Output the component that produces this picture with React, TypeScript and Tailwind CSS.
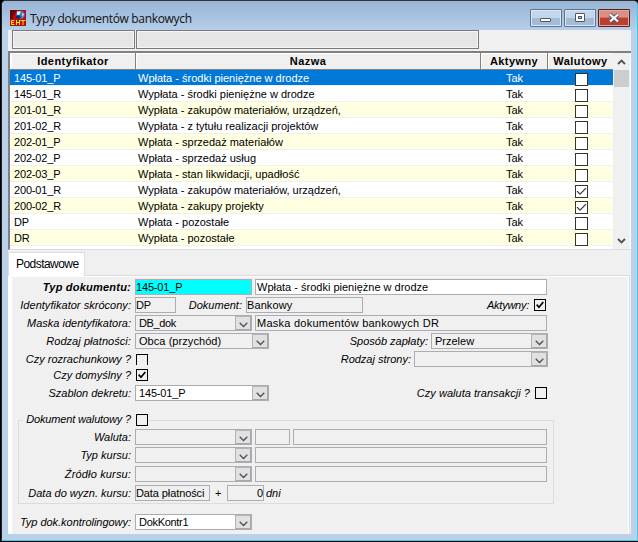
import React from "react";

type DocType = { id: string; name: string; currency?: boolean };

const rows: DocType[] = [
  { id: "145-01_P", name: "Wpłata - środki pieniężne w drodze" },
  { id: "145-01_R", name: "Wypłata - środki pieniężne w drodze" },
  { id: "201-01_R", name: "Wypłata - zakupów materiałów, urządzeń," },
  { id: "201-02_R", name: "Wypłata - z tytułu realizacji projektów" },
  { id: "202-01_P", name: "Wpłata - sprzedaż materiałów" },
  { id: "202-02_P", name: "Wpłata - sprzedaż usług" },
  { id: "202-03_P", name: "Wpłata - stan likwidacji, upadłość" },
  { id: "200-01_R", name: "Wypłata - zakupów materiałów, urządzeń,", currency: true },
  { id: "200-02_R", name: "Wypłata - zakupy projekty", currency: true },
  { id: "DP", name: "Wpłata - pozostałe" },
  { id: "DR", name: "Wypłata - pozostałe" },
];

function Chevron() {
  return (
    <svg width="9" height="6" viewBox="0 0 9 6" fill="none" stroke="#505050" strokeWidth="1.3">
      <path d="M0.7 0.8 4.5 4.5 8.3 0.8" />
    </svg>
  );
}

function Label({ children, className }: { children: React.ReactNode; className: string }) {
  return <span className={`shrink-0 whitespace-pre text-right italic ${className}`}>{children}</span>;
}

function Field({ className = "", children }: { className?: string; children?: React.ReactNode }) {
  return (
    <div className={`flex h-4 shrink-0 items-center whitespace-pre border border-[#abadb3] ${className}`}>{children}</div>
  );
}

function Select({ className = "", children }: { className?: string; children?: React.ReactNode }) {
  return (
    <div className={`flex h-4 shrink-0 items-center border border-[#abadb3] pl-[3px] ${className}`}>
      <span className="grow whitespace-pre">{children}</span>
      <span className="flex h-[14px] w-[16px] items-center justify-center border border-[#b4b4b8] border-r-[#a8a8ac] border-b-[#a8a8ac] bg-[#e1e1e1] pt-[3px]">
        <Chevron />
      </span>
    </div>
  );
}

function Check({ checked, className = "h-3 w-3" }: { checked?: boolean; className?: string }) {
  return (
    <span className={`flex shrink-0 items-center justify-center border border-black ${className}`}>
      {checked && (
        <svg width="8" height="8" viewBox="0 0 8 8" fill="none" stroke="#000" strokeWidth="1.7">
          <path d="M0.7 3.6 3 6.2 7.3 1" />
        </svg>
      )}
    </span>
  );
}

function GridCheck({ checked }: { checked?: boolean }) {
  return (
    <span className="flex h-[13px] w-[13px] items-center justify-center border border-[#333] bg-white">
      {checked && (
        <svg width="11" height="9" viewBox="0 0 11 9" fill="none" stroke="#333" strokeWidth="1.2">
          <path d="M1 4.2 4 7.2 10 1.2" />
        </svg>
      )}
    </span>
  );
}

function TitleBar() {
  const btn = "flex h-[18px] w-[32px] items-center justify-center rounded-[1px] border border-[#5d7390] bg-linear-to-b from-[#c4d6ea] from-50% to-[#a2bcd8] to-50% shadow-[inset_0_0_0_1px_#dbe7f4]";
  return (
    <header className="flex h-[29px] shrink-0 items-start bg-linear-to-b from-[#98b5d5] to-[#b6cee9] pl-[8px] pr-[7px]">
      <svg className="mt-[9px]" width="16" height="16" viewBox="0 0 16 16">
        <rect width="16" height="16" fill="#b80c10" />
        <path d="M0 0h7L3 6v3H0z" fill="#6e0508" />
        <path d="M7 1h6l2 3-1 4-3 1-4-1-1-4z" fill="#3f7ab8" />
        <path d="M7 1.500h4l-2 4-2-1zM12 3l2 1-1.500 3z" fill="#e2f2fb" />
        <path d="M6 6l3-1 2 2-2 2-3-1z" fill="#16305c" />
        <path d="M4.500 10.500h-3v4h3M1.500 12.500h2.500M6.500 15v-5M9.500 15v-5M6.500 12.500h3M10.500 10.500h5M13 10.500V15" stroke="#ffe800" strokeWidth="1" fill="none" />
      </svg>
      <h1 className="ml-[4px] mt-[9px] grow whitespace-pre font-['Open_Sans','Noto_Sans',sans-serif] text-[12px] leading-[18px] tracking-[-0.32px] text-[#111]">Typy dokumentów bankowych</h1>
      <div className="mt-[8px] flex gap-[2px]">
        <span className={btn}>
          <svg width="12" height="6" viewBox="0 0 12 6" className="mt-1"><rect x=".5" y="1.500" width="10" height="3" rx=".5" fill="#fff" stroke="#535666" /></svg>
        </span>
        <span className={btn}>
          <svg width="12" height="10" viewBox="0 0 12 10"><rect x="1.500" y=".5" width="9" height="8" rx=".5" fill="#fff" stroke="#535666" /><rect x="4.500" y="3.500" width="3" height="2" fill="#a9c0dc" stroke="#535666" /></svg>
        </span>
        <span className="flex h-[18px] w-[32px] items-center justify-center rounded-[1px] border border-[#5a1d20] bg-linear-to-b from-[#d98f83] from-45% to-[#b9402e] to-50% shadow-[inset_0_0_0_1px_#e2a79c]">
          <svg width="12" height="10" viewBox="0 0 12 10"><path d="M2 1.500 10 8.500M10 1.500 2 8.500" stroke="#535666" strokeWidth="4" /><path d="M2 1.500 10 8.500M10 1.500 2 8.500" stroke="#fff" strokeWidth="2.200" /></svg>
        </span>
      </div>
    </header>
  );
}

function DocumentTable() {
  const head = "flex items-center justify-center border-r border-[#808080] bg-[#f0f0f0] pt-px shadow-[inset_1px_1px_0_#fff]";
  return (
    <section className="mt-[2px] flex h-[199px] shrink-0 border-t-2 border-b border-l-2 border-t-[#808080] border-b-[#dcdcdc] border-l-[#808080] bg-white">
      <div className="w-[603px] shrink-0">
        <div className="flex h-[17px] border-b border-[#808080] pl-px text-[11px] font-bold tracking-[0.42px]">
          <div className={`${head} w-[125px]`}>Identyfikator</div>
          <div className={`${head} w-[345px]`}>Nazwa</div>
          <div className={`${head} w-[67px]`}>Aktywny</div>
          <div className={`${head} grow border-r-0`}>Walutowy</div>
        </div>
        {rows.map((r, i) => (
          <div key={r.id} className={`flex h-4 border-b border-[#f0f0f0] leading-[16px] ${i === 0 ? "bg-[#0078d7] text-white" : i % 2 === 0 ? "bg-[#ffffe1]" : "bg-white"}`}>
            <span className="w-[128px] whitespace-pre pl-[4px] tracking-[-0.17px]">{r.id}</span>
            <span className="w-[344px] whitespace-pre">{r.name}</span>
            <span className="w-[64px] pl-[24px]">Tak</span>
            <span className="flex grow pl-[29px] pt-[3px]"><GridCheck checked={r.currency} /></span>
          </div>
        ))}
      </div>
      <div className="flex w-[17px] shrink-0 flex-col items-center bg-[#f0f0f0]">
        <svg className="mt-[6px] shrink-0" width="9" height="6" viewBox="0 0 9 6" fill="none" stroke="#505050" strokeWidth="1.8"><path d="M1 5 4.500 1.500 8 5" /></svg>
        <div className="mt-[5px] h-[17px] w-[15px] shrink-0 bg-[#cdcdcd]" />
        <div className="grow" />
        <svg className="mb-[5px] shrink-0" width="9" height="6" viewBox="0 0 9 6" fill="none" stroke="#505050" strokeWidth="1.8"><path d="M1 1 4.500 4.500 8 1" /></svg>
      </div>
    </section>
  );
}

function DetailsForm() {
  return (
    <div className="flex grow flex-col bg-[#f0f0f0] pt-[2px]">
      <div className="flex h-4 items-center">
        <Label className="w-[119px] font-bold tracking-[0.22px]">Typ dokumentu:</Label>
        <Field className="ml-[4px] w-[117px] bg-[#00ffff] tracking-[-0.17px]">145-01_P</Field>
        <Field className="ml-[3px] w-[292px] bg-white pl-px">Wpłata - środki pieniężne w drodze</Field>
      </div>
      <div className="mt-[2px] flex h-4 items-center">
        <Label className="w-[119px] tracking-[0.03px]">Identyfikator skrócony:</Label>
        <Field className="ml-[4px] w-[41px] tracking-[-0.3px]">DP</Field>
        <Label className="w-[66px]">Dokument:</Label>
        <Field className="ml-[4px] w-[117px] tracking-[0.1px]">Bankowy</Field>
        <Label className="w-[166px] tracking-[-0.25px]">Aktywny:</Label>
        <Check checked className="ml-[5px] h-3 w-3" />
      </div>
      <div className="mt-[2px] flex h-4 items-center">
        <Label className="w-[119px]">Maska identyfikatora:</Label>
        <Select className="ml-[4px] w-[117px] tracking-[-0.4px]">DB_dok</Select>
        <Field className="ml-[3px] w-[292px] pl-px tracking-[0.25px]">Maska dokumentów bankowych DR</Field>
      </div>
      <div className="mt-[2px] flex h-4 items-center">
        <Label className="w-[119px] tracking-[0.06px]">Rodzaj płatności:</Label>
        <Select className="ml-[4px] w-[134px] tracking-[0.06px]">Obca (przychód)</Select>
        <Label className="w-[159px]">Sposób zapłaty:</Label>
        <Select className="ml-[3px] w-[117px]">Przelew</Select>
      </div>
      <div className="mt-[2px] flex h-4 items-center">
        <Label className="w-[119px]">Czy rozrachunkowy ?</Label>
        <Check className="ml-[5px] h-[11px] w-3 border-b-0" />
        <Label className="w-[263px]">Rodzaj strony:</Label>
        <Select className="ml-[3px] w-[134px]" />
      </div>
      <div className="mt-px flex h-[14px] items-center">
        <Label className="w-[119px]">Czy domyślny ?</Label>
        <Check checked className="ml-[5px] h-3 w-3" />
      </div>
      <div className="mt-[3px] flex h-4 items-center">
        <Label className="w-[119px]">Szablon dekretu:</Label>
        <Select className="ml-[4px] w-[134px] bg-white tracking-[-0.17px]">145-01_P</Select>
        <Label className="w-[261px] tracking-[0.03px]">Czy waluta transakcji ?</Label>
        <Check className="ml-[5px] h-3 w-3" />
      </div>

      <div className="ml-[6px] mt-[19px] flex h-[84px] w-[536px] flex-col border border-[#dcdcdc]">
        <div className="-mt-[8px] ml-[4px] flex h-[13px] w-[126px] items-center bg-[#f0f0f0]">
          <Label className="w-[108px] tracking-[-0.15px]">Dokument walutowy ?</Label>
          <Check className="ml-[5px] h-3 w-3" />
        </div>
        <div className="mt-[3px] flex h-4 items-center">
          <Label className="w-[112px]">Waluta:</Label>
          <Select className="ml-[4px] w-[117px]" />
          <Field className="ml-[3px] w-[35px]" />
          <Field className="ml-[3px] w-[254px]" />
        </div>
        <div className="mt-[2px] flex h-4 items-center">
          <Label className="w-[112px]">Typ kursu:</Label>
          <Select className="ml-[4px] w-[117px]" />
          <Field className="ml-[3px] w-[292px]" />
        </div>
        <div className="mt-[3px] flex h-4 items-center">
          <Label className="w-[112px] tracking-[0.15px]">Źródło kursu:</Label>
          <Select className="ml-[4px] w-[117px]" />
          <Field className="ml-[3px] w-[292px]" />
        </div>
        <div className="mt-[3px] flex h-4 items-center">
          <Label className="w-[112px]">Data do wyzn. kursu:</Label>
          <Field className="ml-[4px] w-[75px] tracking-[-0.1px]">Data płatności</Field>
          <span className="ml-[5px] w-[12px]">+</span>
          <Field className="w-[37px] justify-end">0</Field>
          <span className="ml-[2px] italic">dni</span>
        </div>
      </div>
      <div className="mt-[10px] flex h-4 items-center">
        <Label className="w-[119px] tracking-[-0.03px]">Typ dok.kontrolingowy:</Label>
        <Select className="ml-[4px] w-[117px] bg-white tracking-[-0.3px]">DokKontr1</Select>
      </div>
    </div>
  );
}

export default function App() {
  return (
    <div className="h-[542px] w-[638px] overflow-hidden bg-black pl-px font-['Liberation_Sans',Arial,sans-serif] text-[11px] leading-[13px] text-black">
      <div className="flex h-[541px] w-[637px] flex-col overflow-hidden rounded-t-[5px] border border-t-[#333] border-r-[#30d0e8] border-b-[#30d0e8] border-l-[#222] bg-[#b9d1ea]">
        <TitleBar />
        <main className="ml-[6px] flex h-[504px] w-[623px] shrink-0 flex-col bg-[#f0f0f0]">
          <div className="flex h-[19px] shrink-0 gap-px pl-[4px]">
            <div className="w-[123px] border border-[#7a7a7a] bg-[#e6e6e6] shadow-[inset_0_0_0_1px_#f6f6f6]" />
            <div className="w-[343px] border border-[#7a7a7a] bg-[#e6e6e6] shadow-[inset_0_0_0_1px_#f6f6f6]" />
          </div>
          <DocumentTable />
          <nav className="mt-[2px] flex h-[23px] shrink-0 items-end">
            <div className="relative z-10 -mb-px flex h-[24px] w-[77px] items-center border border-b-0 border-[#dcdcdc] bg-white pl-[7px] text-[12px] tracking-[-0.55px]">Podstawowe</div>
          </nav>
          <div className="mr-px flex grow border-t border-r border-[#dcdcdc] bg-white pl-[4px] pr-px pt-px">
            <DetailsForm />
          </div>
        </main>
      </div>
    </div>
  );
}
